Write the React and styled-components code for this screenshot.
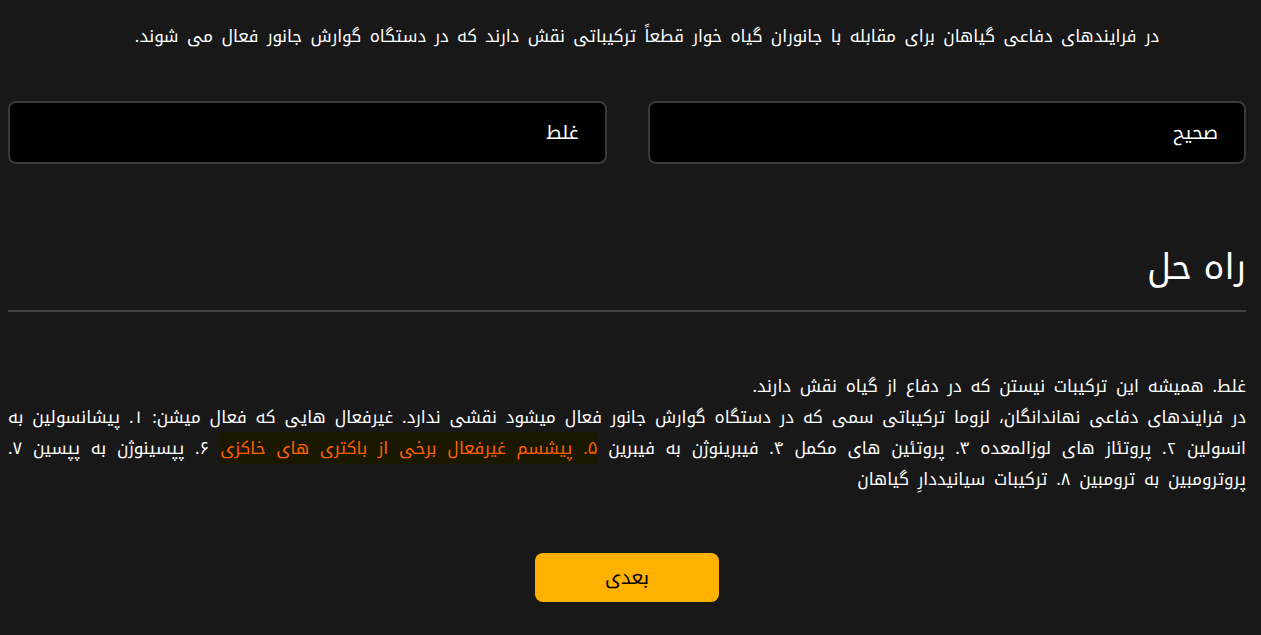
import React from 'react';
import styled, { createGlobalStyle } from 'styled-components';

const GlobalStyle = createGlobalStyle`
  html, body {
    margin: 0;
    padding: 0;
    background: #181818;
  }
  body {
    font-family: "Noto Kufi Arabic", "DejaVu Sans", sans-serif;
    color: #fff;
  }
`

const Page = styled.div`
  direction: rtl;
  padding: 0 15px 40px 8px;
  min-height: 635px;
  box-sizing: border-box;
`

const Question = styled.p`
  margin: 0;
  padding: 20px 0 0 40px;
  text-align: center;
  font-size: 17px;
  line-height: 32px;
  word-spacing: 2.6px;
`

const Options = styled.div`
  display: grid;
  grid-template-columns: 1fr 1fr;
  gap: 41px;
  margin-top: 49px;
`

const Option = styled.button`
  direction: rtl;
  text-align: right;
  background: #000;
  color: #fff;
  border: 2px solid #3a3a3a;
  border-radius: 8px;
  height: 63px;
  padding: 0 26px;
  font-family: inherit;
  font-size: 19px;
  cursor: pointer;
`

const Heading = styled.h2`
  margin: 79px 0 0;
  font-size: 35px;
  font-weight: 400;
  line-height: 50px;
`

const Divider = styled.hr`
  margin: 17px 0 0;
  border: none;
  border-top: 2px solid #424242;
`

const Solution = styled.p`
  margin: 59px 0 0;
  text-align: justify;
  font-size: 17px;
  line-height: 31px;
  word-spacing: 3px;
`

const Mark = styled.span`
  color: #ff6000;
  background: #1a1800;
`

const Footer = styled.div`
  display: flex;
  justify-content: center;
  margin-top: 58px;
`

const NextButton = styled.button`
  width: 184px;
  height: 49px;
  border: none;
  border-radius: 8px;
  background: #ffb100;
  color: #000;
  font-family: inherit;
  font-size: 19px;
  cursor: pointer;
`

export default function App() {
  return (
    <>
      <GlobalStyle />
      <Page>
        <Question>
          در فرایندهای دفاعی گیاهان برای مقابله با جانوران گیاه خوار قطعاً ترکیباتی نقش دارند که در دستگاه گوارش جانور فعال می شوند.
        </Question>
        <Options>
          <Option>صحیح</Option>
          <Option>غلط</Option>
        </Options>
        <Heading>راه حل</Heading>
        <Divider />
        <Solution>
          غلط. همیشه این ترکیبات نیستن که در دفاع از گیاه نقش دارند.
          <br />
          در فرایندهای دفاعی نهاندانگان، لزوما ترکیباتی سمی که در دستگاه گوارش جانور فعال میشود نقشی ندارد. غیرفعال هایی که فعال میشن: ۱. پیشانسولین به انسولین ۲. پروتئاز های لوزالمعده ۳. پروتئین های مکمل ۴. فیبرینوژن به فیبرین <Mark>۵. پیشسم غیرفعال برخی از باکتری های خاکزی</Mark> ۶. پپسینوژن به پپسین ۷. پروترومبین به ترومبین ۸. ترکیبات سیانیددارِ گیاهان
        </Solution>
        <Footer>
          <NextButton>بعدی</NextButton>
        </Footer>
      </Page>
    </>
  );
}
